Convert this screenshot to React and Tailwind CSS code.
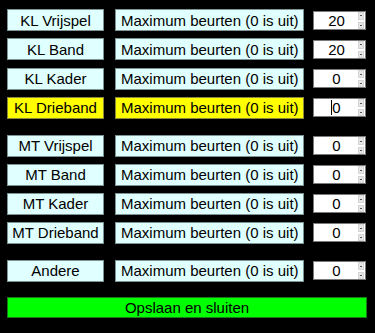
import React from "react";

const groups = [
  [
    { label: "KL Vrijspel", value: "20" },
    { label: "KL Band", value: "20" },
    { label: "KL Kader", value: "0" },
    { label: "KL Drieband", value: "0", active: true },
  ],
  [
    { label: "MT Vrijspel", value: "0" },
    { label: "MT Band", value: "0" },
    { label: "MT Kader", value: "0" },
    { label: "MT Drieband", value: "0" },
  ],
  [{ label: "Andere", value: "0" }],
];

const Spinner = () => (
  <div className="flex flex-col gap-[2px] w-[6px] mr-[1px]">
    <div className="h-[8px] bg-[#e6e6e6] border border-[#d4d4d4] flex items-center justify-center">
      <div className="w-[2px] h-[1px] bg-[#555]" />
    </div>
    <div className="h-[7px] bg-[#e6e6e6] border border-[#d4d4d4] flex items-center justify-center">
      <div className="w-[2px] h-[1px] bg-[#555]" />
    </div>
  </div>
);

const Row = ({ label, value, active }) => {
  const box = active
    ? "bg-[#ffff00] border-[#8a8a3a]"
    : "bg-[#e0ffff] border-[#7d9494]";
  return (
    <div className="flex items-center h-[22px]">
      <div
        className={`w-[97px] h-[22px] border ${box} flex items-center justify-center`}
      >
        {label}
      </div>
      <div
        className={`ml-[11px] w-[189px] h-[22px] border ${box} flex items-center pl-[5px]`}
      >
        Maximum beurten (0 is uit)
      </div>
      <div className="ml-[9px] w-[53px] h-[19px] bg-white border border-[#7a7a7a] flex items-center">
        <div className="flex-1 flex items-center justify-center pl-[1px]">
          {active && <div className="w-[1px] h-[15px] bg-black -mr-[0px]" />}
          <span>{value}</span>
          {active && <div className="w-[1px]" />}
        </div>
        <Spinner />
      </div>
    </div>
  );
};

export default function App() {
  return (
    <div
      className="w-[375px] h-[333px] bg-black text-black text-[15px] leading-none pl-[7px] pt-[9px]"
      style={{ fontFamily: '"Liberation Sans", Arial, sans-serif' }}
    >
      <div className="flex flex-col gap-[7.3px]">
        {groups[0].map((r) => (
          <Row key={r.label} {...r} />
        ))}
      </div>
      <div className="flex flex-col gap-[7px] mt-[16px]">
        {groups[1].map((r) => (
          <Row key={r.label} {...r} />
        ))}
      </div>
      <div className="flex flex-col mt-[16px]">
        {groups[2].map((r) => (
          <Row key={r.label} {...r} />
        ))}
      </div>
      <div className="mt-[15px] w-[360px] h-[21px] bg-[#00ff00] border border-[#1a7a1a] flex items-center justify-center">
        Opslaan en sluiten
      </div>
    </div>
  );
}
